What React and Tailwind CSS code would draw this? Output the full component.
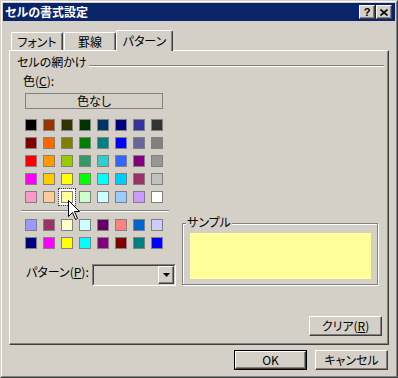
import React from 'react'

const BASE = [
  ['bg-[#000000]', 'bg-[#993300]', 'bg-[#333300]', 'bg-[#003300]', 'bg-[#003366]', 'bg-[#000080]', 'bg-[#333399]', 'bg-[#333333]'],
  ['bg-[#800000]', 'bg-[#ff6600]', 'bg-[#808000]', 'bg-[#008000]', 'bg-[#008080]', 'bg-[#0000ff]', 'bg-[#666699]', 'bg-[#808080]'],
  ['bg-[#ff0000]', 'bg-[#ff9900]', 'bg-[#99cc00]', 'bg-[#339966]', 'bg-[#33cccc]', 'bg-[#3366ff]', 'bg-[#800080]', 'bg-[#969696]'],
  ['bg-[#ff00ff]', 'bg-[#ffcc00]', 'bg-[#ffff00]', 'bg-[#00ff00]', 'bg-[#00ffff]', 'bg-[#00ccff]', 'bg-[#993366]', 'bg-[#c0c0c0]'],
  ['bg-[#ff99cc]', 'bg-[#ffcc99]', 'bg-[#ffff99]', 'bg-[#ccffcc]', 'bg-[#ccffff]', 'bg-[#99ccff]', 'bg-[#cc99ff]', 'bg-[#ffffff]'],
]

const EXTRA = [
  ['bg-[#9999ff]', 'bg-[#993366]', 'bg-[#ffffcc]', 'bg-[#ccffff]', 'bg-[#660066]', 'bg-[#ff8080]', 'bg-[#0066cc]', 'bg-[#ccccff]'],
  ['bg-[#000080]', 'bg-[#ff00ff]', 'bg-[#ffff00]', 'bg-[#00ffff]', 'bg-[#800080]', 'bg-[#800000]', 'bg-[#008080]', 'bg-[#0000ff]'],
]

const raised = 'border border-t-white border-l-white border-r-[#404040] border-b-[#404040] shadow-[inset_-1px_-1px_0_#808080]'

function Swatches({ rows, selected }) {
  return (
    <div className="grid grid-cols-[repeat(8,12px)] gap-[6px]">
      {rows.map((row, r) =>
        row.map((c, i) => (
          <div
            key={r + '-' + i}
            className={`w-[12px] h-[12px] border border-[#808080] ${c} ${
              selected && selected[0] === r && selected[1] === i
                ? 'shadow-[0_0_0_2px_#fff] outline-1 outline-dotted outline-[#404040] outline-offset-[2px]'
                : ''
            }`}
          />
        ))
      )}
    </div>
  )
}

function Tab({ className, children }) {
  return (
    <div className={`h-[18px] bg-[#d4d0c8] border-l border-t border-r border-l-white border-t-white border-r-[#404040] shadow-[inset_-1px_0_0_#808080] rounded-t-[2px] flex items-center justify-center ${className}`}>
      {children}
    </div>
  )
}

function Button({ className, children }) {
  return (
    <div className={`h-[20px] flex items-center justify-center ${raised} ${className}`}>{children}</div>
  )
}

export default function App() {
  return (
    <div className="relative w-[398px] h-[378px] bg-[#d4d0c8] border border-t-[#d4d0c8] border-l-[#d4d0c8] border-r-[#404040] border-b-[#404040] font-['Noto_Sans_CJK_JP',sans-serif] text-[12px] leading-[14px] text-black [font-feature-settings:'palt'] select-none">
      <div className="h-full border border-t-white border-l-white border-r-[#808080] border-b-[#808080] p-[1px] flex flex-col">
        {/* title bar */}
        <div className="h-[18px] bg-[#0a246a] flex items-center pl-[2px] pr-[3px]">
          <span className="text-white font-bold">セルの書式設定</span>
          <div className="ml-auto flex gap-[1px]">
            <div className={`w-[16px] h-[14px] bg-[#d4d0c8] flex items-center justify-center ${raised}`}>
              <span className="font-['Liberation_Sans',sans-serif] font-bold text-[11px] leading-[11px]">?</span>
            </div>
            <div className={`w-[16px] h-[14px] bg-[#d4d0c8] flex items-center justify-center ${raised}`}>
              <svg width="8" height="7" viewBox="0 0 8 7">
                <path d="M0.5 0.5L7.5 6.5M7.5 0.5L0.5 6.5" stroke="#000" strokeWidth="1.6" />
              </svg>
            </div>
          </div>
        </div>

        {/* tabs */}
        <div className="mt-[9px] ml-[8px] h-[20px] flex items-end">
          <Tab className="w-[52px]">フォント</Tab>
          <Tab className="w-[52px] ml-[1px]">罫線</Tab>
          <div className="relative z-10 w-[57px] h-[21px] -mb-[1px] bg-[#d4d0c8] border-l border-t border-r border-l-white border-t-white border-r-[#404040] shadow-[inset_-1px_0_0_#808080] rounded-t-[2px] flex items-center justify-center pb-[1px]">
            パターン
          </div>
        </div>

        {/* panel */}
        <div className="ml-[6px] w-[380px] h-[295px] border border-t-white border-l-white border-r-[#404040] border-b-[#404040] shadow-[inset_-1px_-1px_0_#808080] flex flex-col">
          <div className="mt-[4px] pl-[7px] mr-[4px] flex items-start">
            <span>セルの網かけ</span>
            <div className="flex-1 ml-[2px] mt-[10px] border-t border-t-[#808080] border-b border-b-white" />
          </div>
          <div className="mt-[5px] ml-[13px]">
            色(<span className="underline">C</span>):
          </div>
          <div className="mt-[5px] ml-[15px] w-[138px] h-[16px] border border-[#808080] flex items-center justify-center">
            色なし
          </div>
          <div className="mt-[10px] ml-[15px]">
            <Swatches rows={BASE} selected={[4, 2]} />
          </div>

          <div className="flex">
            <div className="w-[172px] flex flex-col">
              <div className="mt-[7px] ml-[11px] w-[148px] border-t border-t-[#808080] border-b border-b-white" />
              <div className="mt-[7px] ml-[15px]">
                <Swatches rows={EXTRA} />
              </div>
              <div className="mt-[15px] ml-[16px] flex items-start">
                <span className="w-[66px] mt-[1px]">
                  パターン(<span className="underline">P</span>):
                </span>
                <div className="w-[84px] h-[22px] border border-t-[#808080] border-l-[#808080] border-r-white border-b-white">
                  <div className="h-full border border-t-[#404040] border-l-[#404040] border-r-[#d4d0c8] border-b-[#d4d0c8] flex justify-end">
                    <div className={`w-[16px] h-full bg-[#d4d0c8] flex items-center justify-center ${raised}`}>
                      <svg width="7" height="4" viewBox="0 0 7 4">
                        <path d="M0 0H7L3.5 4Z" fill="#000" />
                      </svg>
                    </div>
                  </div>
                </div>
              </div>
            </div>
            <div className="relative mt-[20px] w-[196px] h-[62px] border border-[#808080] shadow-[1px_1px_0_#fff,inset_1px_1px_0_#fff] pl-[7px] pt-[9px]">
              <span className="absolute left-[3px] -top-[9px] px-[1px] bg-[#d4d0c8]">サンプル</span>
              <div className="w-[181px] h-[46px] bg-[#ffff99]" />
            </div>
          </div>

          <Button className="self-end mt-[30px] mr-[6px] w-[73px]">
            クリア(<span className="underline">R</span>)
          </Button>
        </div>

        {/* dialog buttons */}
        <div className="mt-[5px] pr-[7px] flex justify-end gap-[8px]">
          <div className="w-[73px] h-[20px] border border-black">
            <div className={`h-full flex items-center justify-center ${raised}`}>OK</div>
          </div>
          <Button className="w-[73px]">キャンセル</Button>
        </div>
      </div>

      {/* mouse pointer */}
      <svg className="absolute left-[67px] top-[199px]" width="13" height="21" viewBox="0 0 13 21">
        <path d="M0.5 0.5V16.5L4.5 12.5L7.5 19.5L9.5 18.5L6.5 11.5H11.5Z" fill="#fff" stroke="#000" strokeWidth="1" />
      </svg>
    </div>
  )
}
